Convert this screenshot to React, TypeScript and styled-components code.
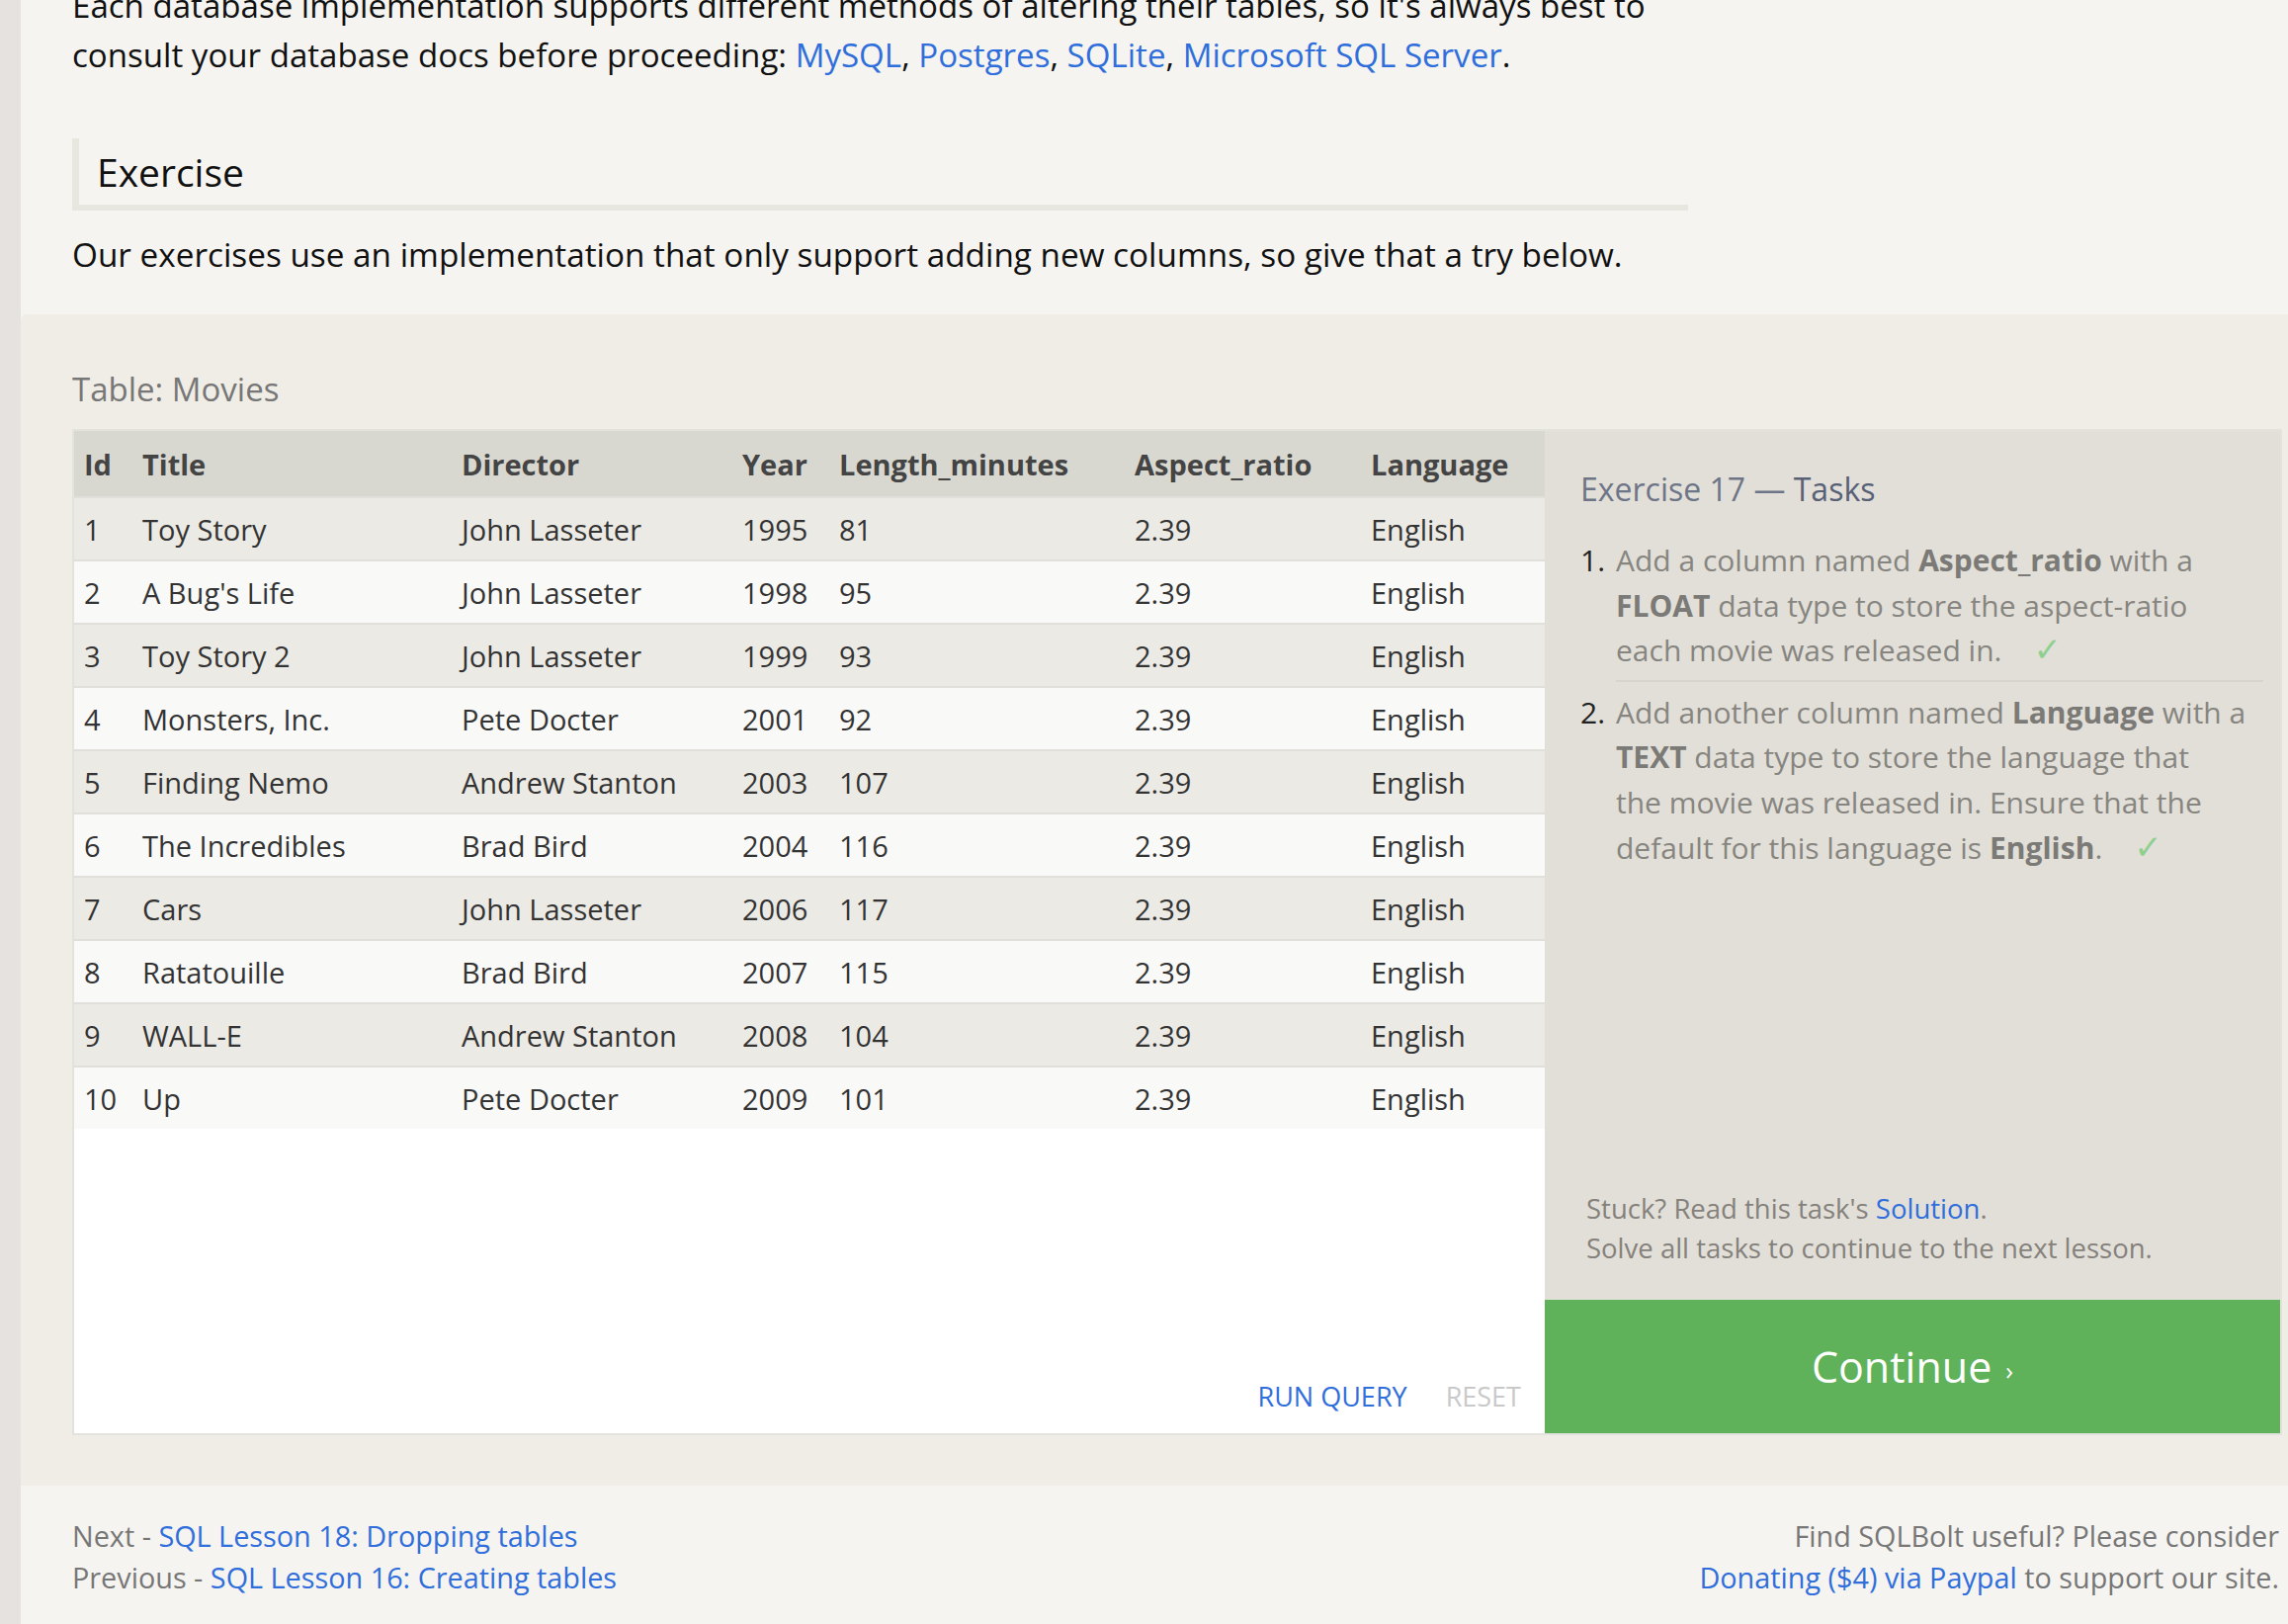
import React from "react";
import styled, { createGlobalStyle } from "styled-components";

const GlobalStyle = createGlobalStyle`
  html, body {
    margin: 0;
    padding: 0;
  }
  body {
    background: #f5f4f0;
    font-family: "Open Sans", "Noto Sans", "DejaVu Sans", sans-serif;
    color: #111;
    overflow: hidden;
  }
`;

const Page = styled.div`
  display: flex;
  height: 1643px;
  overflow: hidden;
`;

const SideStrip = styled.div`
  flex: none;
  width: 21px;
  background: #e5e2df;
`;

const Main = styled.div`
  flex: 1;
  min-width: 0;
  display: flex;
  flex-direction: column;
`;

const Intro = styled.section`
  background: #f5f4f0;
  padding: 0 607px 36px 52px;
`;

const Paragraph = styled.p<{ $lead?: boolean }>`
  margin: ${(p) => (p.$lead ? "-19px 0 0" : "19px 0 0")};
  font-size: ${(p) => (p.$lead ? "33.1px" : "33.3px")};
  line-height: 50px;
  color: #111;
`;

const Link = styled.a`
  color: #2f6edb;
  text-decoration: none;
`;

const SectionHeading = styled.h2`
  margin: 59px 0 0;
  padding: 3px 0 2px 18px;
  border-left: 7px solid #e8e7df;
  border-bottom: 6px solid #e8e7df;
  font-size: 39px;
  line-height: 62px;
  font-weight: 400;
  color: #111;
`;

const ExerciseSection = styled.section`
  background: #efede6;
  border-top-left-radius: 6px;
  padding: 51px 6px 51px 52px;
`;

const TableLabel = styled.div`
  font-size: 33px;
  line-height: 50px;
  color: #777;
  margin-bottom: 15px;
`;

const Widget = styled.div`
  display: flex;
  border: 2px solid #e3e2dc;
`;

const TableArea = styled.div`
  flex: none;
  width: 1488px;
  min-height: 1014px;
  background: #fff;
  display: flex;
  flex-direction: column;
`;

const DataTable = styled.table`
  width: 100%;
  border-collapse: collapse;
  table-layout: fixed;
  font-size: 29px;
`;

const HeadCell = styled.th`
  height: 66px;
  padding: 0 0 0 10px;
  text-align: left;
  font-weight: 700;
  color: #444;
  background: #d9d8d0;
  white-space: nowrap;
`;

const Row = styled.tr<{ $odd: boolean }>`
  background: ${(p) => (p.$odd ? "#ebeae4" : "#f9f9f8")};
  border-top: 2px solid #e0dfd9;
`;

const Cell = styled.td`
  height: 62px;
  padding: 0 0 0 10px;
  color: #333;
  white-space: nowrap;
`;

const Spacer = styled.div`
  flex: 1;
`;

const ButtonRow = styled.div`
  display: flex;
  justify-content: flex-end;
  gap: 39px;
  padding: 0 24px 17px 0;
`;

const QueryButton = styled.button<{ $disabled?: boolean }>`
  background: none;
  border: none;
  padding: 0;
  font-family: inherit;
  font-size: 27px;
  line-height: 40px;
  text-transform: uppercase;
  color: ${(p) => (p.$disabled ? "#c9c9c9" : "#2f6edb")};
  cursor: pointer;
`;

const TasksPanel = styled.aside`
  flex: 1;
  display: flex;
  flex-direction: column;
  background: #e1dfd8;
`;

const TasksBody = styled.div`
  padding: 39px 17px 0 36px;
`;

const TasksTitle = styled.h3`
  margin: 0;
  font-size: 32px;
  line-height: 40px;
  font-weight: 400;
  color: #6e7587;
`;

const TitleStrong = styled.span`
  color: #596177;
`;

const TaskList = styled.ol`
  list-style: none;
  margin: 29px 0 0;
  padding: 0;
`;

const TaskItem = styled.li`
  display: flex;
  font-size: 30px;
  line-height: 45.6px;
  color: #878580;
  & + & {
    margin-top: 8px;
  }
`;

const TaskNum = styled.span`
  flex: none;
  width: 36px;
  color: #222;
`;

const TaskText = styled.div<{ $divided?: boolean }>`
  flex: 1;
  padding-bottom: ${(p) => (p.$divided ? "7px" : "0")};
  border-bottom: ${(p) => (p.$divided ? "2px solid #d6d4cc" : "none")};
`;

const Bold = styled.b`
  font-weight: 700;
  color: #7b7a76;
`;

const Check = styled.span`
  margin-left: 32px;
  font-family: "DejaVu Sans", sans-serif;
  font-size: 34px;
  line-height: 0;
  color: #8fd08f;
`;

const StuckBox = styled.div`
  padding: 0 17px 32px 42px;
  font-size: 27.5px;
  line-height: 40px;
  color: #85817c;
`;

const ContinueButton = styled.button`
  height: 135px;
  border: none;
  background: #5fb15a;
  color: #fff;
  font-family: inherit;
  font-size: 43px;
  display: flex;
  align-items: center;
  justify-content: center;
  gap: 14px;
  cursor: pointer;
`;

const Chevron = styled.span`
  font-size: 26px;
  margin-top: 6px;
`;

const Footer = styled.footer`
  flex: 1;
  background: #f5f4f0;
  padding: 30px 9px 0 52px;
  display: flex;
  justify-content: space-between;
  font-size: 28.8px;
  line-height: 42px;
  color: #777;
`;

const FooterCol = styled.div<{ $right?: boolean }>`
  text-align: ${(p) => (p.$right ? "right" : "left")};
`;

const columns = [
  { name: "Id", width: 59 },
  { name: "Title", width: 323 },
  { name: "Director", width: 284 },
  { name: "Year", width: 98 },
  { name: "Length_minutes", width: 299 },
  { name: "Aspect_ratio", width: 239 },
  { name: "Language", width: 186 },
];

const movies: [number, string, string, number, number][] = [
  [1, "Toy Story", "John Lasseter", 1995, 81],
  [2, "A Bug's Life", "John Lasseter", 1998, 95],
  [3, "Toy Story 2", "John Lasseter", 1999, 93],
  [4, "Monsters, Inc.", "Pete Docter", 2001, 92],
  [5, "Finding Nemo", "Andrew Stanton", 2003, 107],
  [6, "The Incredibles", "Brad Bird", 2004, 116],
  [7, "Cars", "John Lasseter", 2006, 117],
  [8, "Ratatouille", "Brad Bird", 2007, 115],
  [9, "WALL-E", "Andrew Stanton", 2008, 104],
  [10, "Up", "Pete Docter", 2009, 101],
];

export default function App() {
  return (
    <>
      <GlobalStyle />
      <Page>
        <SideStrip />
        <Main>
          <Intro>
            <Paragraph $lead>
              Each database implementation supports different methods of altering their tables, so it's always best to
              consult your database docs before proceeding: <Link href="#">MySQL</Link>,{" "}
              <Link href="#">Postgres</Link>, <Link href="#">SQLite</Link>,{" "}
              <Link href="#">Microsoft SQL Server</Link>.
            </Paragraph>
            <SectionHeading>Exercise</SectionHeading>
            <Paragraph>
              Our exercises use an implementation that only support adding new columns, so give that a try below.
            </Paragraph>
          </Intro>

          <ExerciseSection>
            <TableLabel>Table: Movies</TableLabel>
            <Widget>
              <TableArea>
                <DataTable>
                  <colgroup>
                    {columns.map((c) => (
                      <col key={c.name} style={{ width: c.width }} />
                    ))}
                  </colgroup>
                  <thead>
                    <tr>
                      {columns.map((c) => (
                        <HeadCell key={c.name}>{c.name}</HeadCell>
                      ))}
                    </tr>
                  </thead>
                  <tbody>
                    {movies.map(([id, title, director, year, len], i) => (
                      <Row key={id} $odd={i % 2 === 0}>
                        <Cell>{id}</Cell>
                        <Cell>{title}</Cell>
                        <Cell>{director}</Cell>
                        <Cell>{year}</Cell>
                        <Cell>{len}</Cell>
                        <Cell>2.39</Cell>
                        <Cell>English</Cell>
                      </Row>
                    ))}
                  </tbody>
                </DataTable>
                <Spacer />
                <ButtonRow>
                  <QueryButton>Run Query</QueryButton>
                  <QueryButton $disabled>Reset</QueryButton>
                </ButtonRow>
              </TableArea>

              <TasksPanel>
                <TasksBody>
                  <TasksTitle>
                    Exercise 17 — <TitleStrong>Tasks</TitleStrong>
                  </TasksTitle>
                  <TaskList>
                    <TaskItem>
                      <TaskNum>1.</TaskNum>
                      <TaskText $divided>
                        Add a column named <Bold>Aspect_ratio</Bold> with a
                        <br />
                        <Bold>FLOAT</Bold> data type to store the aspect-ratio
                        <br />
                        each movie was released in.
                        <Check>✓</Check>
                      </TaskText>
                    </TaskItem>
                    <TaskItem>
                      <TaskNum>2.</TaskNum>
                      <TaskText>
                        Add another column named <Bold>Language</Bold> with a
                        <br />
                        <Bold>TEXT</Bold> data type to store the language that
                        <br />
                        the movie was released in. Ensure that the
                        <br />
                        default for this language is <Bold>English</Bold>.<Check>✓</Check>
                      </TaskText>
                    </TaskItem>
                  </TaskList>
                </TasksBody>
                <Spacer />
                <StuckBox>
                  Stuck? Read this task's <Link href="#">Solution</Link>.
                  <br />
                  Solve all tasks to continue to the next lesson.
                </StuckBox>
                <ContinueButton>
                  Continue <Chevron>›</Chevron>
                </ContinueButton>
              </TasksPanel>
            </Widget>
          </ExerciseSection>

          <Footer>
            <FooterCol>
              Next - <Link href="#">SQL Lesson 18: Dropping tables</Link>
              <br />
              Previous - <Link href="#">SQL Lesson 16: Creating tables</Link>
            </FooterCol>
            <FooterCol $right>
              Find SQLBolt useful? Please consider
              <br />
              <Link href="#">Donating ($4) via Paypal</Link> to support our site.
            </FooterCol>
          </Footer>
        </Main>
      </Page>
    </>
  );
}
